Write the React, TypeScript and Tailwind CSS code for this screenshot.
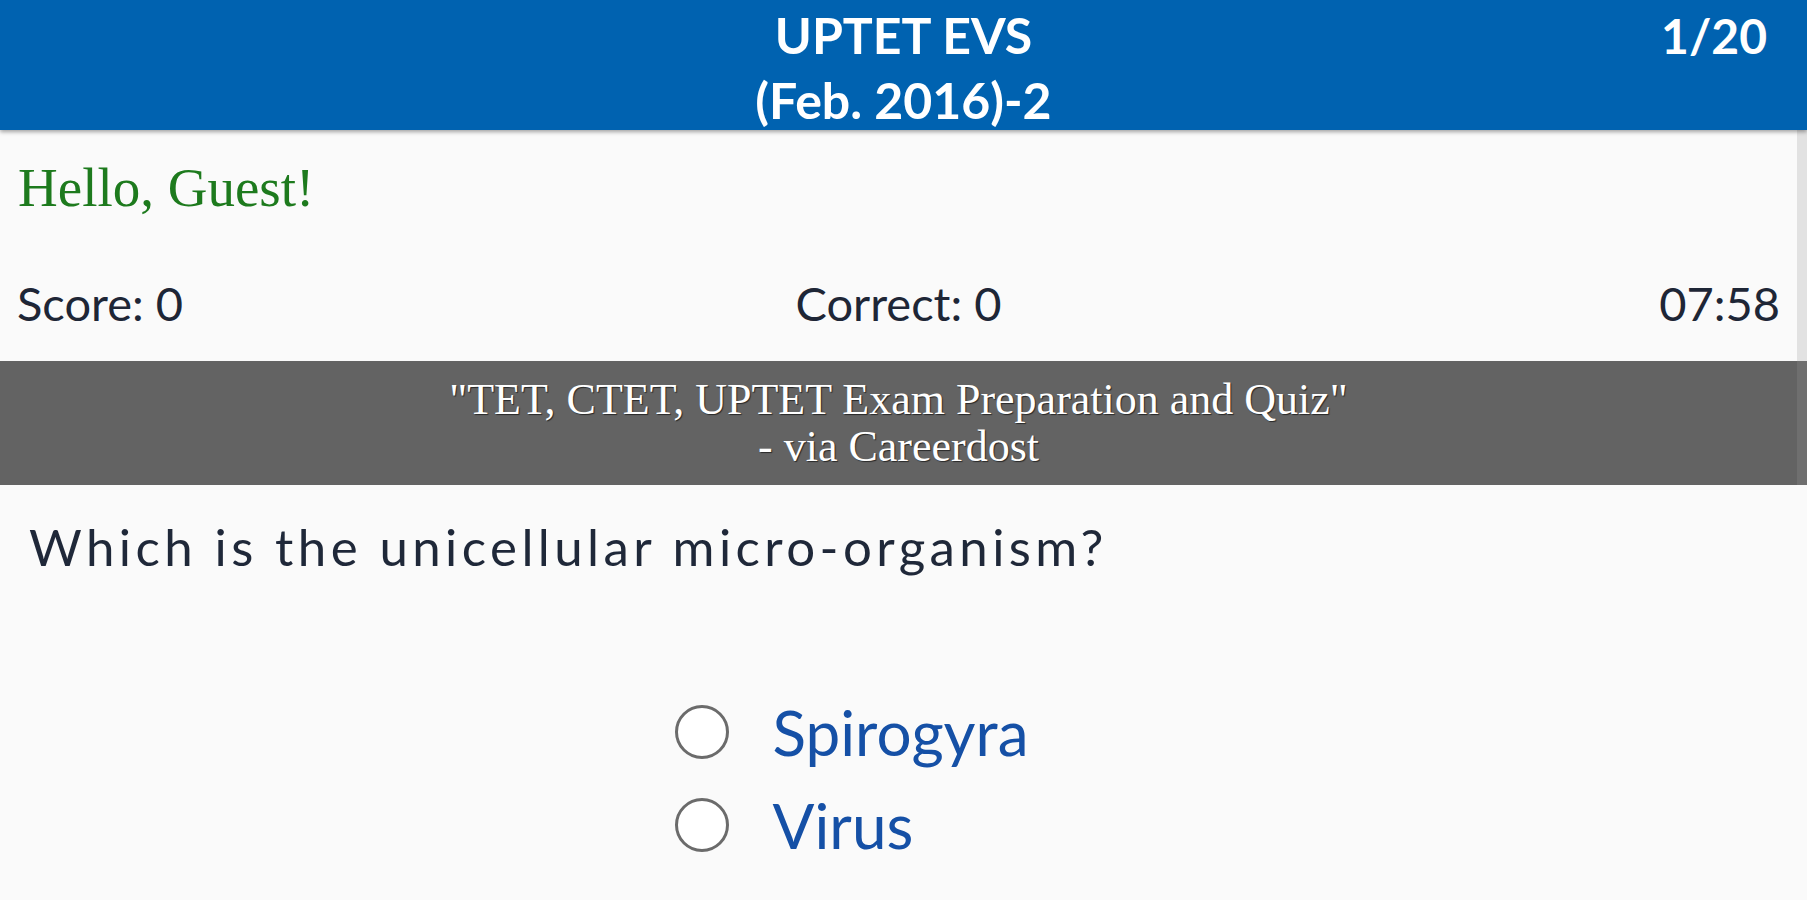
import React from "react";

const options = ["Spirogyra", "Virus"];

const sans = { fontFamily: "Lato, 'Open Sans', sans-serif" };
const serif = { fontFamily: "'Liberation Serif', 'DejaVu Serif', serif" };

function Option({ label }: { label: string }) {
    return (
        <label className="flex items-center h-[93px] cursor-pointer">
            <span className="w-[54px] h-[54px] rounded-full border-[3px] border-[#6b6b6b] bg-white shrink-0" />
            <span className="ml-[44px] text-[62px] leading-none text-[#1550a6]" style={sans}>{label}</span>
        </label>
    );
}

export default function App() {
    return (
        <div className="min-h-screen w-full bg-[#fafafa]">
            {/* top bar */}
            <header className="grid grid-cols-[1fr_auto_1fr] h-[130px] bg-[#0062b0] text-white shadow-[0_2px_4px_rgba(0,0,0,0.35)] relative z-10" style={sans}>
                <div />
                <div className="text-center font-bold text-[50px] leading-[65px] pt-[3px]">
                    <div>UPTET EVS</div>
                    <div>(Feb. 2016)-2</div>
                </div>
                <div className="text-right font-bold text-[48px] leading-[65px] pt-[3px] pr-[40px]">1/20</div>
            </header>

            <section className="border-r-[10px] border-[#e2e2e2]">
                <div className="pt-[26px] pl-[18px] text-[55px] leading-[64px] text-[#1d7a1d]" style={serif}>
                    Hello, Guest!
                </div>
                <div className="grid grid-cols-3 items-center mt-[48px] h-[56px] px-[17px] text-[47px] text-[#1e2636]" style={sans}>
                    <span>Score: 0</span>
                    <span className="text-center">Correct: 0</span>
                    <span className="text-right">07:58</span>
                </div>
                <div className="h-[37px]" />
            </section>

            <div className="flex items-center justify-center h-[124px] bg-[#636363] border-r-[10px] border-[#6f6f6f] text-white text-center text-[44px] leading-[47px] [text-shadow:1px_1px_1px_rgba(0,0,0,0.6)]" style={serif}>
                <div>
                    <div>"TET, CTET, UPTET Exam Preparation and Quiz"</div>
                    <div>- via Careerdost</div>
                </div>
            </div>

            <main>
                <h1 className="pt-[32px] pl-[29px] text-[51px] leading-[60px] tracking-[4.4px] text-[#1f2839]" style={sans}>
                    Which is the unicellular micro-organism?
                </h1>
                <div className="flex justify-center mt-[108px]">
                    <div className="w-[458px]">
                        {options.map((o) => (
                            <Option key={o} label={o} />
                        ))}
                    </div>
                </div>
            </main>
        </div>
    );
}
